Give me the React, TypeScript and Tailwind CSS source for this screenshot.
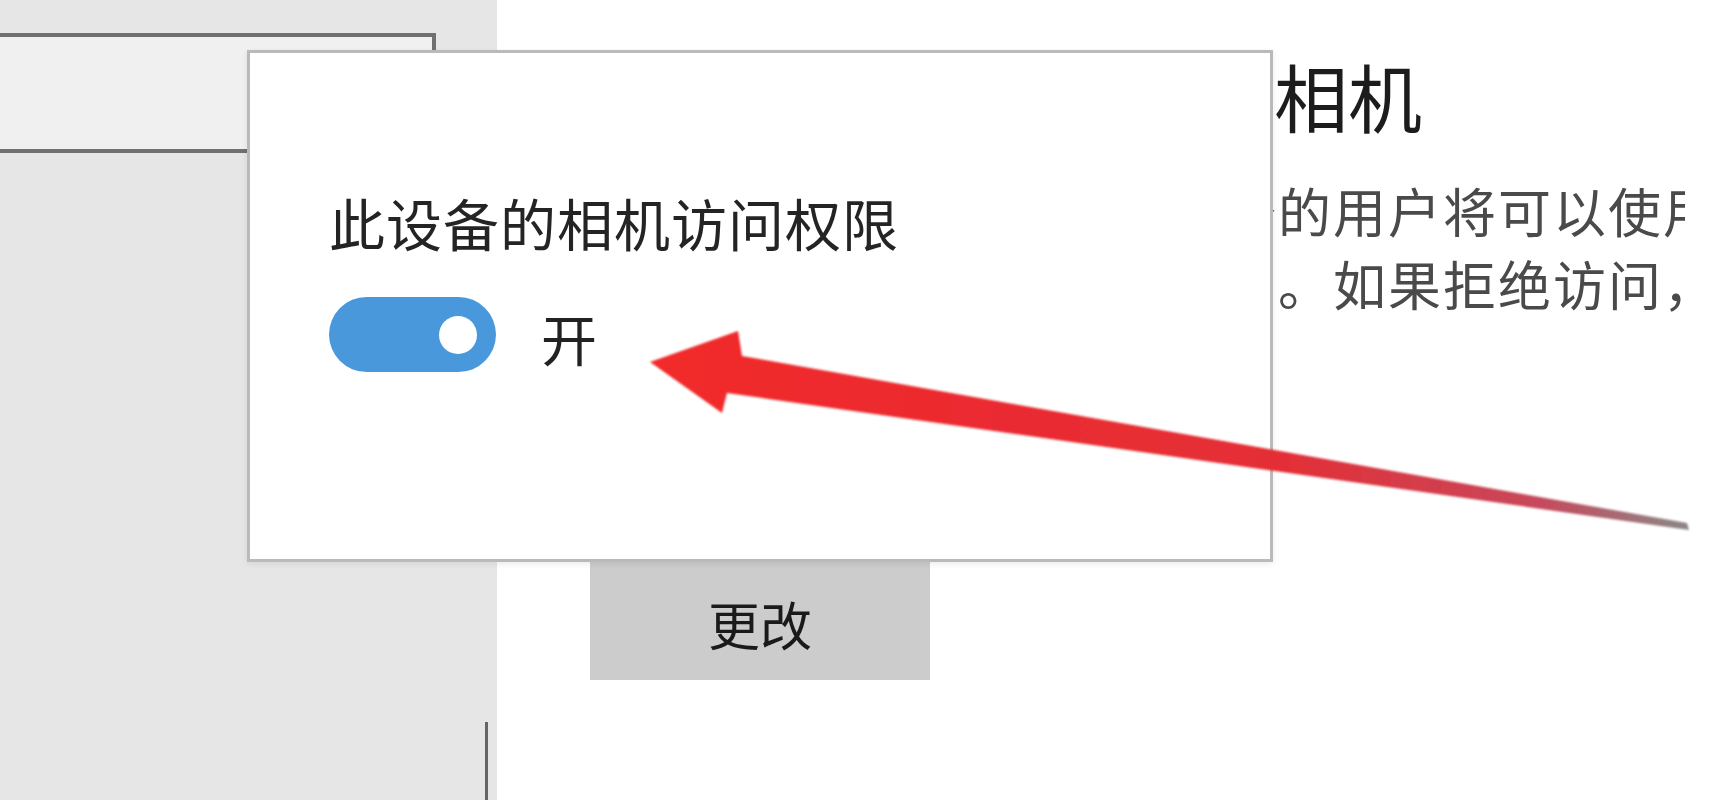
import React from "react";

const cjk = { fontFamily: '"Noto Sans CJK SC", "Noto Sans", sans-serif' };

function Arrow() {
  return (
    <svg
      className="pointer-events-none absolute left-0 top-0"
      width={1729}
      height={800}
      viewBox="0 0 1729 800"
    >
      <defs>
        <linearGradient id="arrowFill" x1="650" y1="0" x2="1690" y2="0" gradientUnits="userSpaceOnUse">
          <stop offset="0" stopColor="#f22a2a" />
          <stop offset="0.6" stopColor="#e42e36" />
          <stop offset="0.85" stopColor="#c8485a" />
          <stop offset="1" stopColor="#8a8888" />
        </linearGradient>
        <filter id="soft" x="-5%" y="-20%" width="110%" height="140%">
          <feGaussianBlur stdDeviation="1.3" />
        </filter>
      </defs>
      <polygon
        points="650,362 738,331 742,356 1687,523 1689,530 727,393 722,413"
        fill="url(#arrowFill)"
        filter="url(#soft)"
      />
    </svg>
  );
}

export default function App() {
  return (
    <div className="relative flex h-[800px] w-[1729px] overflow-hidden bg-white" style={cjk}>
      {/* Sidebar */}
      <div className="flex h-full w-[497px] shrink-0 flex-col bg-[#e6e6e6]">
        <div className="h-[33px]" />
        <div className="h-[120px] w-[436px] border-y-[4px] border-r-[4px] border-[#707070] bg-[#f0f0f0]" />
        <div className="flex flex-1 flex-col items-end justify-end pr-[9px]">
          <div className="h-[78px] w-[3px] bg-[#666666]" />
        </div>
      </div>

      {/* Main content */}
      <div className="flex w-[1188px] flex-col pl-[93px]">
        <div className="pt-[58px] pl-[684px] text-[74px] leading-none text-[#1c1c1c] whitespace-nowrap">
          相机
        </div>
        <div className="mt-[42px] w-[1095px] overflow-hidden pl-[28px] text-[53px] leading-[73px] tracking-[2px] text-[#4a4a4a] whitespace-nowrap">
          <div>如果允许访问，使用此设备的用户将可以使用相机设置页面</div>
          <div>选择其应用是否有相机访问。如果拒绝访问，将阻止应用</div>
        </div>
        <div className="mt-[240px] flex h-[120px] w-[340px] items-center justify-center bg-[#cccccc] pt-[8px] text-[52px] leading-none text-[#1a1a1a]">
          更改
        </div>
      </div>

      {/* Flyout dialog */}
      <div className="absolute left-[247px] top-[50px] h-[512px] w-[1026px] border-[3px] border-[#bababa] bg-white shadow-[0_2px_6px_rgba(0,0,0,0.08)]">
        <div className="pl-[79px] pt-[141px]">
          <div className="text-[56px] leading-none tracking-[1px] text-[#242424] whitespace-nowrap">
            此设备的相机访问权限
          </div>
          <div className="mt-[47px] flex items-center gap-[45px]">
            <div className="flex h-[75px] w-[167px] items-center justify-end rounded-full bg-[#4a98dc] pr-[19px]">
              <div className="h-[38px] w-[38px] rounded-full bg-white" />
            </div>
            <div className="pt-[4px] text-[56px] leading-none text-[#222222]">开</div>
          </div>
        </div>
      </div>

      <Arrow />
    </div>
  );
}
